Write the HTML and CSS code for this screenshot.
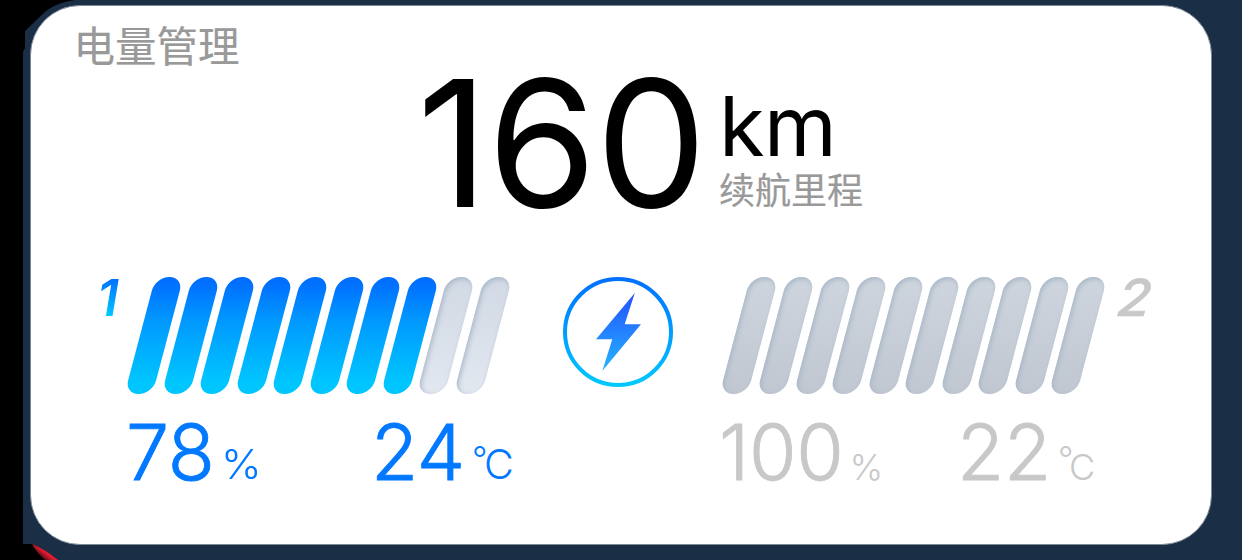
FILE: index.html
```html
<!DOCTYPE html>
<html lang="zh-CN">
<head>
<meta charset="utf-8">
<title>电量管理</title>
<link rel="stylesheet" href="styles.css">
</head>
<body>
<svg class="backdrop" viewBox="0 0 1242 560" aria-hidden="true">
  <defs><linearGradient id="red" gradientUnits="userSpaceOnUse" x1="48" y1="549" x2="39" y2="560"><stop offset="0" stop-color="#f5243a"/><stop offset=".35" stop-color="#d51c30"/><stop offset="1" stop-color="#000"/></linearGradient></defs>
  <path fill="#000" d="M0 0H1242V560H0z"/>
  <path fill="#1a2e46" d="M75 0H1242V560H58Q45 549 32 544H23V52L25 48V31L46 11Q58 2 75 0z"/>
  <path fill="url(#red)" d="M32 544Q45 549 58 560H45Q36 552 32 544z"/>
</svg>
<main class="card">
  <h1 class="title">电量管理</h1>
  <section class="range">
    <span class="range-value">160</span>
    <div class="range-side"><span class="range-unit">km</span><span class="range-label">续航里程</span></div>
  </section>
  <section class="batteries">
    <span class="index index-one">1</span>
    <div class="cells">
      <i class="cell full"></i><i class="cell full"></i><i class="cell full"></i><i class="cell full"></i><i class="cell full"></i><i class="cell full"></i><i class="cell full"></i><i class="cell full"></i><i class="cell empty"></i><i class="cell empty"></i>
    </div>
    <svg class="charge" viewBox="0 0 110 110">
      <defs>
        <linearGradient id="ring" x1="0" y1="0" x2="0" y2="1"><stop offset="0" stop-color="#0070ff"/><stop offset=".4" stop-color="#0094ff"/><stop offset="1" stop-color="#00c8ff"/></linearGradient>
        <linearGradient id="bolt" x1="0" y1="0" x2="0" y2="1"><stop offset="0" stop-color="#2450ff"/><stop offset="1" stop-color="#24b4ff"/></linearGradient>
      </defs>
      <circle cx="55" cy="55" r="53" fill="none" stroke="url(#ring)" stroke-width="4"/>
      <path fill="url(#bolt)" d="M71.8 16L61.7 47.3H78L39.3 94L49.3 62.3H33z"/>
    </svg>
    <div class="cells">
      <i class="cell idle"></i><i class="cell idle"></i><i class="cell idle"></i><i class="cell idle"></i><i class="cell idle"></i><i class="cell idle"></i><i class="cell idle"></i><i class="cell idle"></i><i class="cell idle"></i><i class="cell idle"></i>
    </div>
    <span class="index index-two">2</span>
  </section>
  <section class="readings">
    <div class="reading charge-one"><span class="number">78</span><span class="percent">%</span></div>
    <div class="reading temp-one"><span class="number">24</span><span class="degree">°</span><span class="celsius">C</span></div>
    <div class="reading charge-two"><span class="number">100</span><span class="percent">%</span></div>
    <div class="reading temp-two"><span class="number">22</span><span class="degree">°</span><span class="celsius">C</span></div>
  </section>
</main>
</body>
</html>
```
FILE: styles.css
```css
* { box-sizing: border-box; }
body { margin: 0; width: 1242px; height: 560px; overflow: hidden; padding: 5px 0 0 30px; font-family: Inter, "Liberation Sans", "Noto Sans CJK SC", sans-serif; }
.backdrop { position: absolute; left: 0; top: 0; width: 1242px; height: 560px; z-index: -1; }
.card { width: 1182px; height: 540px; border: 1px solid #7d8996; border-radius: 50px; background: #fff; display: flex; flex-direction: column; }
.title { margin: 17px 0 0 42.5px; height: 56px; font: 400 41.5px/42px "Noto Sans CJK SC", sans-serif; color: #999; -webkit-text-stroke: .2px #999; }
.range { display: flex; height: 198px; padding-left: 386px; color: #000; }
.range-value { font-size: 176px; line-height: .728; letter-spacing: -1px; width: 302px; white-space: nowrap; }
.range-side { display: flex; flex-direction: column; padding-top: 17px; }
.range-unit { font-size: 83px; line-height: .728; letter-spacing: -.5px; }
.range-label { margin-top: 14px; font: 400 36px/36px "Noto Sans CJK SC", sans-serif; color: #999; -webkit-text-stroke: .2px #999; }
.batteries { display: flex; height: 147px; padding-left: 68px; align-items: flex-start; }
.index { width: 43px; margin: 2px 0 0 -2px; font-size: 51px; line-height: .728; font-style: italic; }
.index-one { font-weight: 600; color: transparent; background: linear-gradient(#0070ff, #00c8ff); background-clip: text; -webkit-background-clip: text; }
.index-two { font-weight: 500; color: #c8c8c8; margin-left: 24px; transform: skewX(-6deg) scaleX(1.06); transform-origin: left bottom; -webkit-text-stroke: .6px #c8c8c8; }
.cells { display: flex; gap: 9.06px; height: 117px; }
.cell { width: 27.5px; height: 117px; border-radius: 13.75px; transform: skewX(-14.8deg); }
.full { background: linear-gradient(#006fff 5%, #0098ff 37%, #00c6ff 90%); }
.empty { background: linear-gradient(#d1d9e4, #e2e7f0); box-shadow: inset 2px 2px 5px #a9b8c9; }
.idle { background: linear-gradient(#ced5de, #c0c7d1); box-shadow: inset 2px 2px 5px #a9b7c7; }
.charge { width: 110px; height: 110px; margin: 0 62px 0 67px; flex: none; }
.readings { display: grid; grid-template-columns: 245px 348px 238px 180px; padding-left: 95px; }
.reading { display: flex; align-items: flex-end; height: 56px; color: #0078ff; }
.number { font-size: 77px; line-height: .728; font-weight: 300; letter-spacing: -.3px; -webkit-text-stroke: .8px currentColor; }
.percent, .celsius { font-size: 41px; line-height: .728; font-weight: 300; }
.percent { margin-left: 7px; }
.charge-one .percent { transform: scaleX(1.06); transform-origin: left; }
.degree { font-size: 34px; line-height: .728; font-weight: 300; margin-left: 7px; align-self: flex-start; margin-top: 23px; width: 12px; }
.charge-two, .temp-two { color: #c8c8c8; }
.charge-two .percent, .temp-two .celsius { font-size: 36px; }
.charge-two .percent { margin-left: 6px; }
.temp-two .celsius { margin-left: -1px; }
```
